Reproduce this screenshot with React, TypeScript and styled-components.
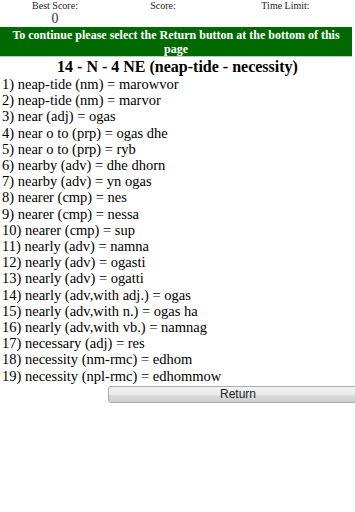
import React from 'react';
import styled, { createGlobalStyle } from 'styled-components';

const GlobalStyle = createGlobalStyle`
  body {
    margin: 0;
    background: #ffffff;
    font-family: "Liberation Serif", "Times New Roman", serif;
    color: #000;
  }
`;

const words = [
  'neap-tide (nm) = marowvor',
  'neap-tide (nm) = marvor',
  'near (adj) = ogas',
  'near o to (prp) = ogas dhe',
  'near o to (prp) = ryb',
  'nearby (adv) = dhe dhorn',
  'nearby (adv) = yn ogas',
  'nearer (cmp) = nes',
  'nearer (cmp) = nessa',
  'nearer (cmp) = sup',
  'nearly (adv) = namna',
  'nearly (adv) = ogasti',
  'nearly (adv) = ogatti',
  'nearly (adv,with adj.) = ogas',
  'nearly (adv,with n.) = ogas ha',
  'nearly (adv,with vb.) = namnag',
  'necessary (adj) = res',
  'necessity (nm-rmc) = edhom',
  'necessity (npl-rmc) = edhommow',
];

const App = () => {
  return (
    <Page>
      <GlobalStyle />
      <ScoreBar>
        <ScoreCell>
          <ScoreLabel>Best Score:</ScoreLabel>
          <ScoreValue>0</ScoreValue>
        </ScoreCell>
        <ScoreCell>
          <ScoreLabel>Score:</ScoreLabel>
        </ScoreCell>
        <ScoreCell>
          <ScoreLabel>Time Limit:</ScoreLabel>
        </ScoreCell>
      </ScoreBar>
      <Banner>To continue please select the Return button at the bottom of this page</Banner>
      <Title>14 - N - 4 NE (neap-tide - necessity)</Title>
      <WordList>
        {words.map((w, i) => (
          <Word key={i}>
            {i + 1}) {w}
          </Word>
        ))}
      </WordList>
      <Footer>
        <ReturnButton>Return</ReturnButton>
      </Footer>
    </Page>
  );
};

const serif = `"Liberation Serif", "Times New Roman", serif`;

const Page = styled.div`
  width: 355px;
  overflow: hidden;
  font-family: ${serif};
`;

const ScoreBar = styled.div`
  display: grid;
  grid-template-columns: 110px 106px 139px;
  height: 27px;
`;

const ScoreCell = styled.div`
  display: flex;
  flex-direction: column;
  align-items: center;
`;

const ScoreLabel = styled.span`
  font-size: 10px;
  line-height: 11px;
  color: #222;
`;

const ScoreValue = styled.span`
  font-size: 14px;
  line-height: 15px;
  color: #333;
`;

const Banner = styled.div`
  width: 352px;
  background: #006a00;
  color: #fff;
  font-weight: bold;
  font-size: 12px;
  line-height: 14px;
  text-align: center;
  padding: 1px 0 0;
  border-bottom: 1px solid #c8c8c8;
`;

const Title = styled.h1`
  margin: 0;
  font-family: ${serif};
  font-size: 16px;
  line-height: 19px;
  text-align: center;
  font-weight: bold;
`;

const WordList = styled.div`
  display: flex;
  flex-direction: column;
  padding-left: 2px;
`;

const Word = styled.div`
  font-size: 14.5px;
  line-height: 16.2px;
  white-space: nowrap;
`;

const Footer = styled.div`
  display: flex;
  padding-left: 108px;
  margin-top: 2px;
`;

const ReturnButton = styled.button`
  flex: 0 0 260px;
  height: 17px;
  padding: 0;
  border: 1px solid #acacac;
  border-radius: 3px;
  background: linear-gradient(#f2f2f2, #ebebeb 50%, #dddddd 51%, #cfcfcf);
  font-family: "Liberation Sans", Arial, sans-serif;
  font-size: 12px;
  line-height: 15px;
  color: #222;
`;

export default App;
